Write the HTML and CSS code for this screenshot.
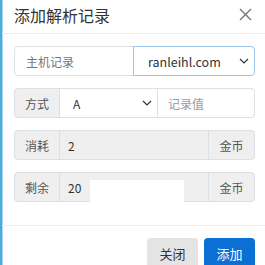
FILE: index.html
```html
<!DOCTYPE html>
<html lang="zh-CN">
<head>
<meta charset="utf-8">
<link rel="stylesheet" href="styles.css">
</head>
<body>
<div class="modal">
  <div class="header">
    <span class="title">添加解析记录</span>
    <svg class="close" width="13" height="13" viewBox="0 0 13 13"><path d="M1 1L12 12M12 1L1 12" stroke="#777" stroke-width="1.4" fill="none"/></svg>
  </div>
  <div class="body">
    <div class="group">
      <div class="cell host">主机记录</div>
      <div class="cell select focus"><span>ranleihl.com</span><svg class="chev" width="10" height="6" viewBox="0 0 10 6"><path d="M1 1L5 5L9 1" stroke="#333" stroke-width="1.2" fill="none"/></svg></div>
    </div>
    <div class="group">
      <div class="cell addon">方式</div>
      <div class="cell select mid"><span>A</span><svg class="chev" width="10" height="6" viewBox="0 0 10 6"><path d="M1 1L5 5L9 1" stroke="#333" stroke-width="1.2" fill="none"/></svg></div>
      <div class="cell input ph">记录值</div>
    </div>
    <div class="group">
      <div class="cell addon">消耗</div>
      <div class="cell input dis">2</div>
      <div class="cell addon end">金币</div>
    </div>
    <div class="group">
      <div class="cell addon">剩余</div>
      <div class="cell input dis">20</div>
      <div class="cell addon end">金币</div>
      <div class="mask"></div>
    </div>
  </div>
  <div class="footer">
    <button class="btn gray">关闭</button>
    <button class="btn blue">添加</button>
  </div>
</div>
</body>
</html>
```
FILE: styles.css
```css
html, body {
  margin: 0;
  padding: 0;
  background: #fff;
}
body {
  font-family: "Noto Sans CJK SC", "Noto Sans", sans-serif;
  font-size: 12px;
  color: #333;
  width: 265px;
  height: 265px;
  overflow: hidden;
}
.modal {
  border-left: 2px solid #4aaedc;
  box-shadow: inset 1px 0 0 #a9d7ee;
  height: 265px;
  box-sizing: border-box;
}
.header {
  height: 33px;
  border-bottom: 1px solid #ededed;
  display: flex;
  align-items: center;
  justify-content: space-between;
  padding: 0 13px 0 12px;
}
.title {
  font-size: 16px;
  color: #333;
  line-height: 1;
  margin-top: -3px;
}
.close {
  margin-top: -4px;
}
.body {
  padding: 12px 10px 23px 12px;
  display: flex;
  flex-direction: column;
  gap: 12px;
  border-bottom: 1px solid #efefef;
}
.group {
  display: flex;
  height: 30px;
  position: relative;
}
.cell {
  box-sizing: border-box;
  height: 30px;
  border: 1px solid #dcdfe3;
  display: flex;
  align-items: center;
  margin-left: -1px;
}
.cell:first-child {
  margin-left: 0;
  border-radius: 4px 0 0 4px;
}
.cell:last-child, .cell.end {
  border-radius: 0 4px 4px 0;
}
.host {
  width: 120px;
  padding-left: 11px;
  color: #777;
}
.select {
  justify-content: space-between;
  padding: 0 5px 0 13px;
}
.select.focus {
  width: 122px;
  border-color: #9ec5ea;
  position: relative;
  z-index: 1;
  padding-left: 14px;
}
.select.focus span {
  font-size: 12.5px;
}
.select.mid {
  width: 99px;
}
.addon {
  width: 46px;
  background: #efefef;
  color: #555;
  justify-content: center;
}
.input {
  flex: 1;
  padding-left: 10px;
}
.ph {
  color: #999;
}
.dis {
  background: #efefef;
  padding-left: 8px;
}
.addon.end {
  width: 47px;
}
.mask {
  position: absolute;
  left: 76px;
  top: 8px;
  width: 94px;
  height: 26px;
  background: #fff;
  z-index: 2;
}
.footer {
  display: flex;
  justify-content: flex-end;
  gap: 6px;
  padding: 12px 10px 0 0;
}
.btn {
  font-family: inherit;
  font-size: 13px;
  height: 30px;
  width: 51px;
  border: none;
  border-radius: 4px;
  padding: 0;
}
.gray {
  background: #e4e4e4;
  color: #333;
}
.blue {
  background: #0b6fd3;
  color: #fff;
}
```
